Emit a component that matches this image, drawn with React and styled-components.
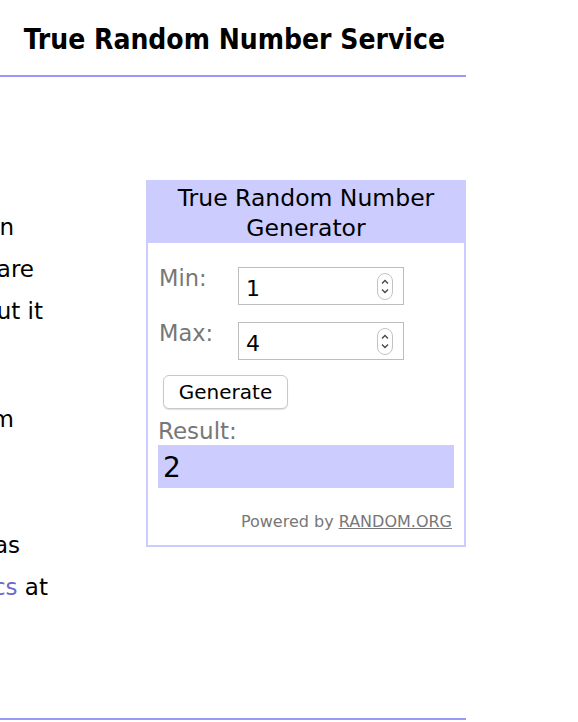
import React from "react";
import styled, { createGlobalStyle } from "styled-components";

const GlobalStyle = createGlobalStyle`
html, body {
  margin: 0;
  padding: 0;
  background: #fff;
  overflow: hidden;
}
body {
  font-family: "DejaVu Sans", Verdana, sans-serif;
  color: #000;
}
`

// the page is scrolled sideways, so the left column hangs off the viewport
const Page = styled.div`
width: 1166px;
margin-left: -700px;
`

const TopBar = styled.header`
display: flex;
justify-content: flex-end;
padding: 24px 21px 19px 0;
border-bottom: 2px solid #9999f8;
`

const Heading = styled.h1`
margin: 0;
font-family: "DejaVu Sans Condensed", "DejaVu Sans", sans-serif;
font-stretch: condensed;
font-size: 28px;
line-height: 32px;
font-weight: bold;
`

const Main = styled.main`
display: grid;
grid-template-columns: 750px 320px;
column-gap: 96px;
align-items: start;
height: 641px;
box-sizing: border-box;
padding-top: 103px;
`

const TextColumn = styled.div`
padding-top: 26px;
font-size: 23px;
line-height: 42px;
`

const Para = styled.p`
margin: 0 0 24px;
`

const Line = styled.span`
display: block;
white-space: nowrap;
text-align: right;
padding-right: ${props => props.$trail}px;
`

const Link = styled.a`
color: #6a6acc;
text-decoration: none;
`

const Widget = styled.section`
box-sizing: border-box;
width: 320px;
border: 2px solid #ccccff;
background: #fff;
`

const WidgetTitle = styled.div`
background: #ccccff;
text-align: center;
font-size: 23.5px;
line-height: 30px;
padding: 1px 0 0;
`

const WidgetBody = styled.div`
padding: 24px 10px 0;
`

const Field = styled.div`
display: flex;
align-items: flex-start;
margin-bottom: ${props => props.$space}px;
`

const FieldLabel = styled.label`
width: 79px;
padding-left: 1px;
font-size: 22.5px;
line-height: 22px;
color: #777;
`

const NumberBox = styled.div`
box-sizing: border-box;
width: 166px;
height: 38px;
border: 1px solid #bdbdbd;
display: flex;
align-items: center;
justify-content: space-between;
padding: 4px 10px 0 7px;
font-size: 22px;
`

const Spinner = styled.svg`
display: block;
margin-top: -4px;
`

const GenerateButton = styled.button`
display: block;
margin-left: 5px;
width: 125px;
height: 34px;
margin-top: 1px;
border: 1px solid #c9c9c9;
border-radius: 6px;
background: #fff;
box-shadow: 0 1px 1px rgba(0, 0, 0, 0.12);
font-family: "DejaVu Sans", sans-serif;
font-size: 20px;
color: #000;
padding: 0;
`

const ResultLabel = styled.div`
margin-top: 9px;
font-size: 23px;
line-height: 27px;
color: #777;
`

const ResultBox = styled.div`
background: #ccccff;
height: 43px;
box-sizing: border-box;
padding: 3px 0 0 5px;
font-size: 28px;
line-height: 40px;
`

const Powered = styled.div`
margin-top: 24px;
padding: 0 2px 14px 0;
text-align: right;
font-size: 16px;
line-height: 19px;
color: #777;

a {
  color: #777;
  text-decoration: underline;
}
`

const BottomRule = styled.div`
border-top: 2px solid #9999f8;
`

const SpinIcon = () => (
  <Spinner width="16" height="27" viewBox="0 0 16 27">
    <rect x="0.5" y="0.5" width="15" height="26" rx="7.5" fill="#fff" stroke="#c2c2c2" />
    <path d="M5 10.5 L8 7.5 L11 10.5" fill="none" stroke="#444" strokeWidth="1.3" />
    <path d="M5 16.5 L8 19.5 L11 16.5" fill="none" stroke="#444" strokeWidth="1.3" />
  </Spinner>
)

const App = () => {
  return (
    <>
      <GlobalStyle />
      <Page>
        <TopBar>
          <Heading>True Random Number Service</Heading>
        </TopBar>
        <Main>
          <TextColumn>
            <Para>
              <Line $trail={36}>RANDOM.ORG offers true random numbers to anyone on</Line>
              <Line $trail={16}>the Internet. Numbers from this service are</Line>
              <Line $trail={7}>not produced by a computer program, but it</Line>
              <Line $trail={90}>uses atmospheric noise.</Line>
            </Para>
            <Para>
              <Line $trail={36}>People use it for drawings, lotteries and random</Line>
              <Line $trail={90}>selection, for games and for art and music.</Line>
              <Line $trail={90}>The service has existed since 1998 and it</Line>
              <Line $trail={30}>has been run by a small team and was</Line>
              <Line $trail={2}>
                built at the <Link href="#">School of Computer Science and Statistics</Link> at
              </Line>
            </Para>
          </TextColumn>
          <Widget>
            <WidgetTitle>
              True Random Number
              <br />
              Generator
            </WidgetTitle>
            <WidgetBody>
              <Field $space={17}>
                <FieldLabel>Min:</FieldLabel>
                <NumberBox>
                  <span>1</span>
                  <SpinIcon />
                </NumberBox>
              </Field>
              <Field $space={15}>
                <FieldLabel>Max:</FieldLabel>
                <NumberBox>
                  <span>4</span>
                  <SpinIcon />
                </NumberBox>
              </Field>
              <GenerateButton>Generate</GenerateButton>
              <ResultLabel>Result:</ResultLabel>
              <ResultBox>2</ResultBox>
              <Powered>
                Powered by <a href="#">RANDOM.ORG</a>
              </Powered>
            </WidgetBody>
          </Widget>
        </Main>
        <BottomRule />
      </Page>
    </>
  );
};

export default App;
